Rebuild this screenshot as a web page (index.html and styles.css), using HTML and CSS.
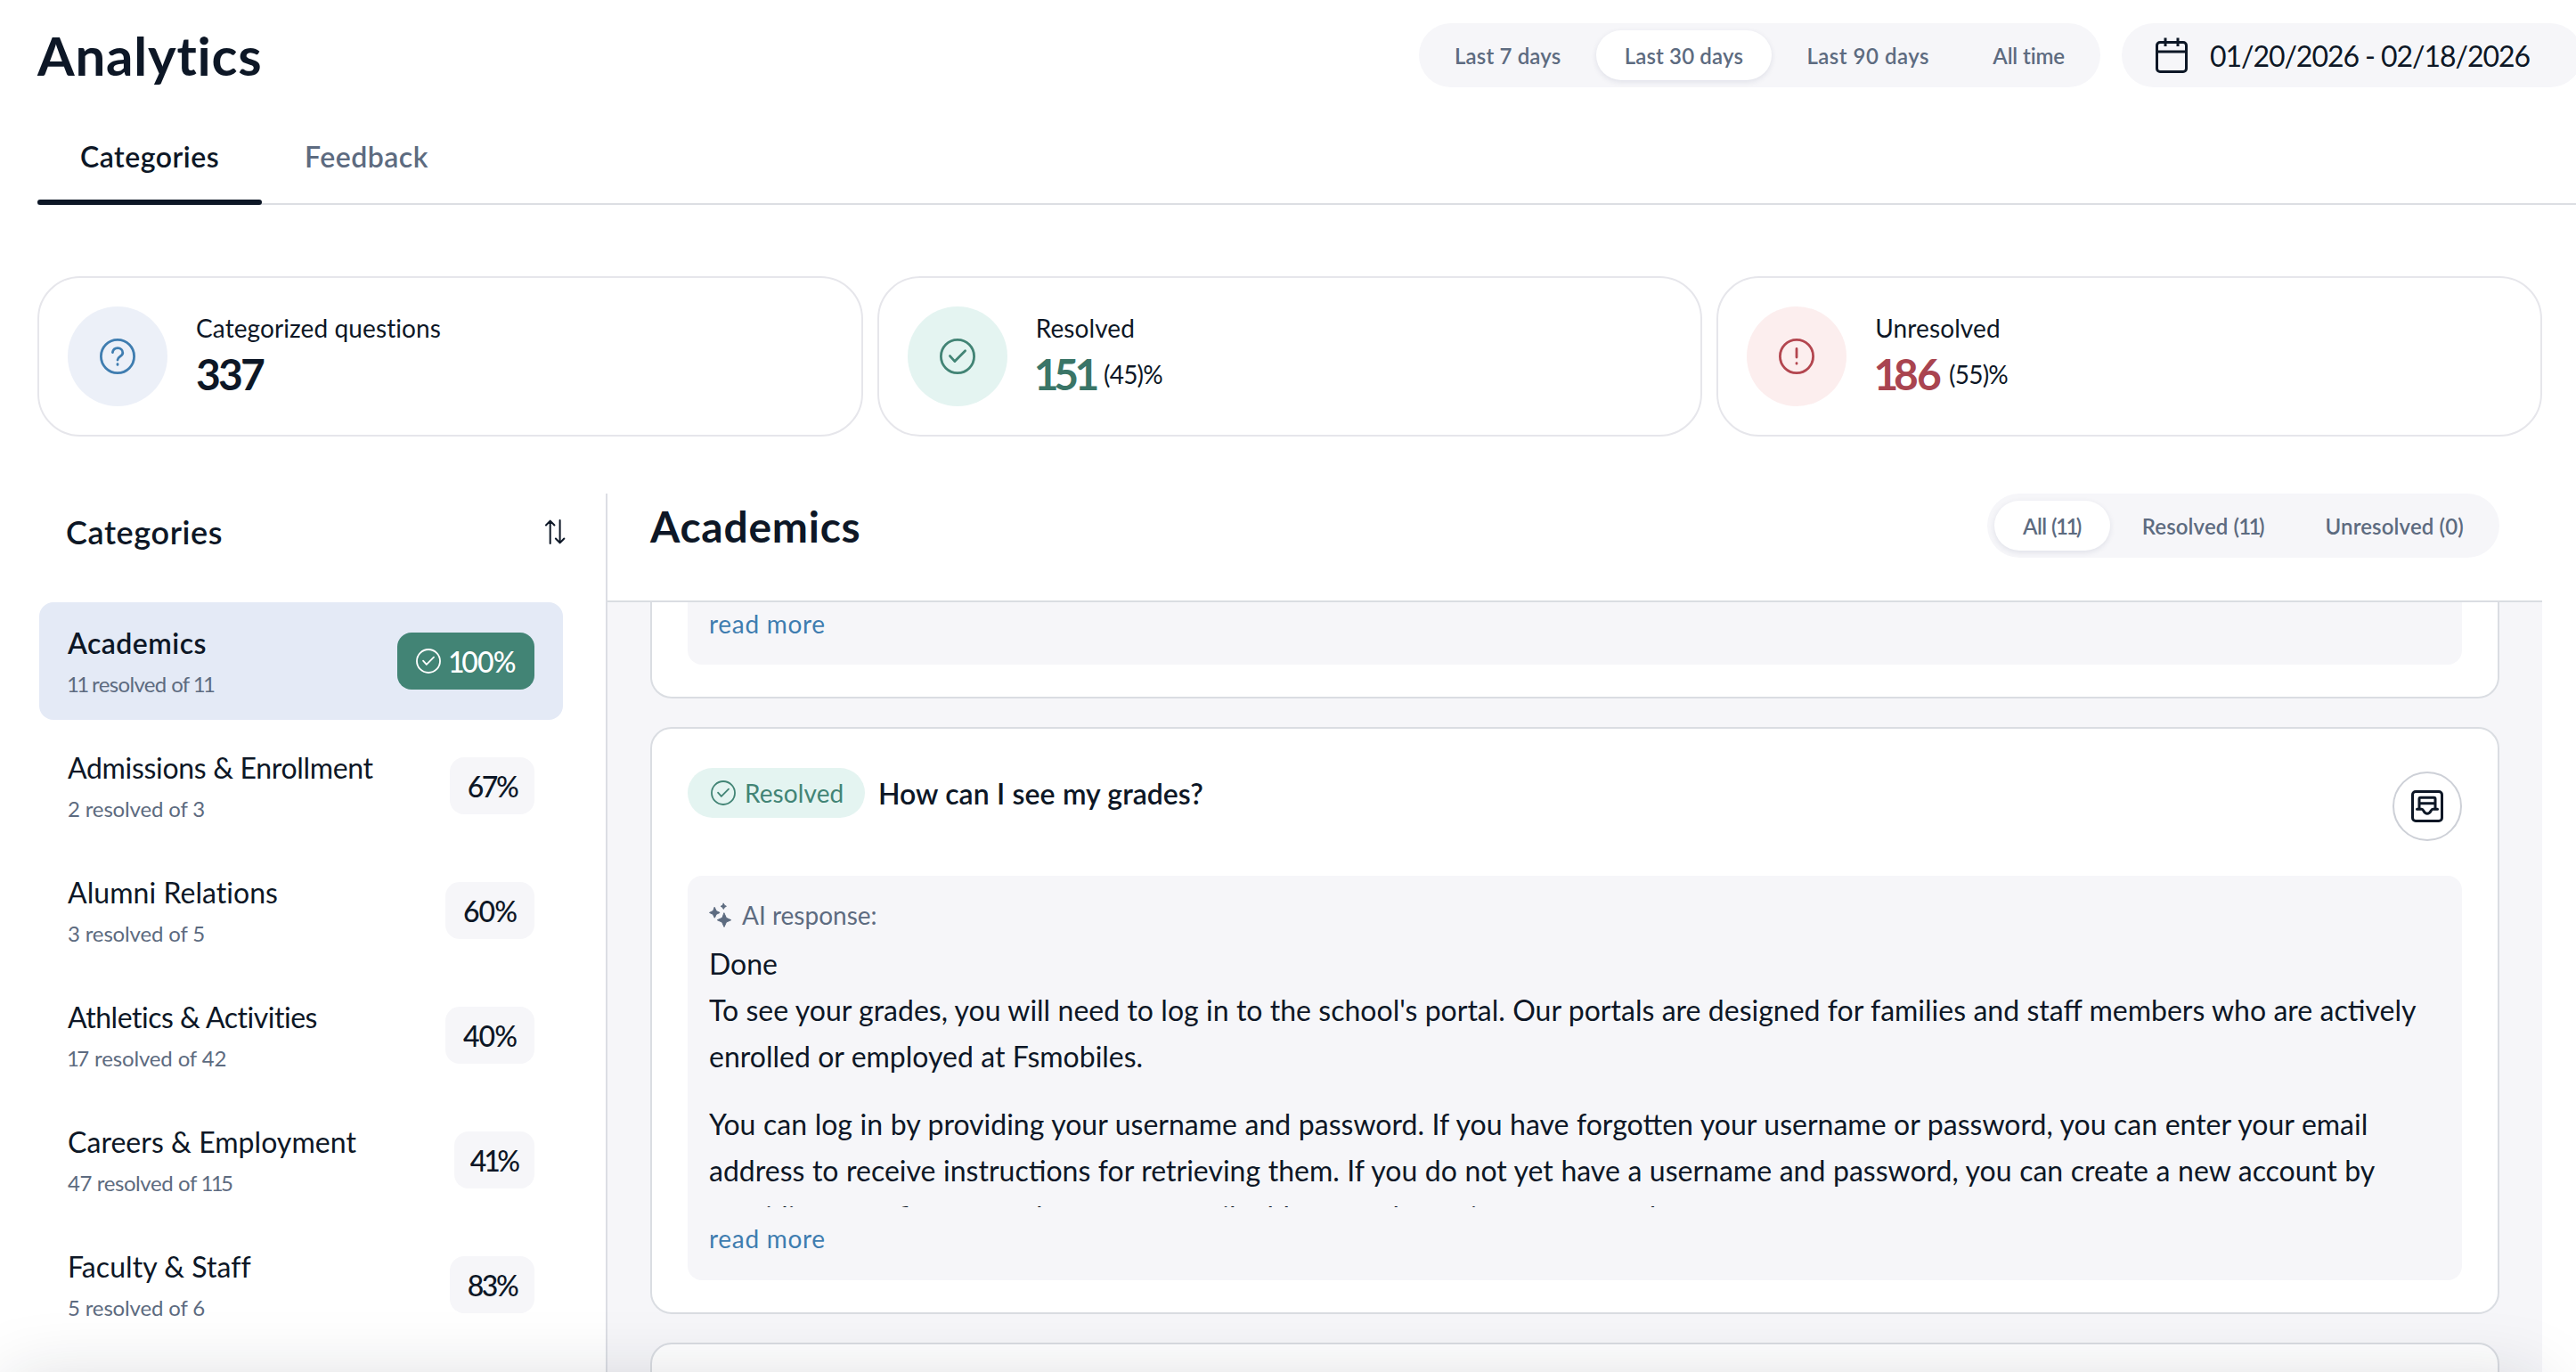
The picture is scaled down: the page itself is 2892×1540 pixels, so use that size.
FILE: index.html
```html
<!DOCTYPE html>
<html lang="en">
<head>
<meta charset="utf-8">
<title>Analytics</title>
<link rel="stylesheet" href="styles.css">
</head>
<body>
<svg class="defs" width="0" height="0" aria-hidden="true">
  <symbol id="check" viewBox="0 0 40 40">
    <circle cx="20" cy="20" r="18.6"/>
    <path d="M11.5 19.6l5.4 6L28.6 13.8"/>
  </symbol>
</svg>

<header class="topbar">
  <h1 class="title">Analytics</h1>
  <div class="segmented segmented--range">
    <button class="segment">Last 7 days</button>
    <button class="segment segment--active">Last 30 days</button>
    <button class="segment segment--loose">Last 90 days</button>
    <button class="segment segment--tight">All time</button>
  </div>
  <button class="daterange">
    <svg class="calendar" viewBox="0 0 36 40"><rect x="1.5" y="5.5" width="33" height="33" rx="3.5"/><path d="M1.5 16h33M11 .5v9.5M25 .5v9.5"/></svg>
    <span>01/20/2026 - 02/18/2026</span>
  </button>
</header>

<nav class="tabs">
  <a class="tab tab--active">Categories</a>
  <a class="tab">Feedback</a>
</nav>

<section class="stats">
  <article class="stat">
    <span class="stat-icon stat-icon--blue">
      <svg viewBox="0 0 40 40"><circle cx="20" cy="20" r="18.6"/><path d="M14.4 15.6c.5-3 2.700-4.900 5.700-4.900 3.300 0 5.700 2.200 5.700 5.200 0 4.300-5.800 4.100-5.800 8.100M20 28.600v.8"/></svg>
    </span>
    <div class="stat-text">
      <span class="stat-label">Categorized questions</span>
      <div class="stat-row"><strong class="stat-value">337</strong></div>
    </div>
  </article>
  <article class="stat">
    <span class="stat-icon stat-icon--green"><svg><use href="#check"/></svg></span>
    <div class="stat-text">
      <span class="stat-label">Resolved</span>
      <div class="stat-row"><strong class="stat-value stat-value--green"><span class="one">1</span>5<span class="one">1</span></strong><span class="stat-share">(45)%</span></div>
    </div>
  </article>
  <article class="stat">
    <span class="stat-icon stat-icon--red">
      <svg viewBox="0 0 40 40"><circle cx="20" cy="20" r="18.6"/><path d="M20 11.500v9.500M20 27.600v.6"/></svg>
    </span>
    <div class="stat-text">
      <span class="stat-label">Unresolved</span>
      <div class="stat-row"><strong class="stat-value stat-value--red"><span class="one">1</span>86</strong><span class="stat-share">(55)%</span></div>
    </div>
  </article>
</section>

<main class="panel">
  <aside class="sidebar">
    <div class="sidebar-head">
      <h2 class="sidebar-title">Categories</h2>
      <svg class="sort" viewBox="0 0 24 28"><path d="M5.700 27V2M1 6.500L5.700 1.600l4.700 4.900M16.600 1v25M11.900 21.500l4.700 4.900 4.700-4.900"/></svg>
    </div>
    <ul class="categories">
      <li class="category category--active">
        <div class="category-text"><span class="category-name">Academics</span><span class="category-sub category-sub--tight"><span class="one">11</span> resolved of <span class="one">11</span></span></div>
        <span class="badge badge--full"><svg><use href="#check"/></svg><span><span class="one">1</span>00%</span></span>
      </li>
      <li class="category">
        <div class="category-text"><span class="category-name">Admissions &amp; Enrollment</span><span class="category-sub">2 resolved of 3</span></div>
        <span class="badge">67%</span>
      </li>
      <li class="category">
        <div class="category-text"><span class="category-name category-name--loose">Alumni Relations</span><span class="category-sub">3 resolved of 5</span></div>
        <span class="badge badge--wide">60%</span>
      </li>
      <li class="category">
        <div class="category-text"><span class="category-name category-name--tight">Athletics &amp; Activities</span><span class="category-sub"><span class="one">1</span>7 resolved of 42</span></div>
        <span class="badge badge--wide">40%</span>
      </li>
      <li class="category">
        <div class="category-text"><span class="category-name category-name--loose">Careers &amp; Employment</span><span class="category-sub category-sub--snug">47 resolved of <span class="one">11</span>5</span></div>
        <span class="badge badge--narrow">4<span class="one">1</span>%</span>
      </li>
      <li class="category">
        <div class="category-text"><span class="category-name category-name--loose">Faculty &amp; Staff</span><span class="category-sub">5 resolved of 6</span></div>
        <span class="badge">83%</span>
      </li>
    </ul>
  </aside>

  <section class="detail">
    <div class="detail-head">
      <h2 class="detail-title">Academics</h2>
      <div class="segmented segmented--status">
        <button class="segment segment--active segment--all">All (<span class="one">11</span>)</button>
        <button class="segment">Resolved (<span class="one">11</span>)</button>
        <button class="segment">Unresolved (0)</button>
      </div>
    </div>
    <div class="feed">
      <article class="card card--first">
        <div class="answer answer--end"><a class="more">read more</a></div>
      </article>
      <article class="card">
        <div class="card-head">
          <span class="pill"><svg><use href="#check"/></svg>Resolved</span>
          <h3 class="question">How can I see my grades?</h3>
          <button class="round" aria-label="Open conversation">
            <svg viewBox="0 0 36 36"><rect x="1.500" y="1.500" width="33" height="33" rx="3.500"/><path d="M9 21V9.800c0-.9.600-1.500 1.500-1.500h15c.9 0 1.500.6 1.500 1.500V21M9 14.800h18M6.500 21.300h5.300c2.400 0 2 4.900 6.200 4.900s3.800-4.900 6.200-4.900h5.300"/></svg>
          </button>
        </div>
        <div class="answer">
          <div class="answer-label">
            <svg viewBox="0 0 26 28"><path d="M17 12l2.400 5.300 5.300 2.400-5.300 2.400L17 27.400l-2.400-5.300-5.300-2.400 5.300-2.400zM6.300 5.600l1.900 3.900 3.900 1.900-3.900 1.900-1.900 3.900-1.900-3.900L.5 11.400l3.900-1.900zM16.300 1.200l1.100 2 2 1.100-2 1.100-1.100 2-1.100-2-2-1.100 2-1.100z"/></svg>
            AI response:
          </div>
          <div class="answer-body">
            <p>Done</p>
            <p class="spaced">To see your grades, you will need to log in to the school's portal. Our portals are designed for families and staff members who are actively<br>enrolled or employed at Fsmobiles.</p>
            <p class="spaced-more">You can log in by providing your username and password. If you have forgotten your username or password, you can enter your email<br>address to receive instructions for retrieving them. If you do not yet have a username and password, you can create a new account by<br>providing your first name, last name, email address, and creating a password.</p>
          </div>
          <a class="more">read more</a>
        </div>
      </article>
      <article class="card card--next"></article>
    </div>
  </section>
</main>
<div class="dock-shadow"></div>
</body>
</html>
```
FILE: styles.css
```css
* { box-sizing: border-box; }

body {
  margin: 0;
  width: 2892px;
  height: 1540px;
  overflow: hidden;
  background: #fff;
  color: #0d1726;
  font-family: "Lato", "Liberation Sans", sans-serif;
  font-size: 32px;
  display: flex;
  flex-direction: column;
}

h1, h2, h3, p, ul { margin: 0; padding: 0; }
button { border: 0; font-family: inherit; color: inherit; padding: 0; }
svg { display: block; flex: none; fill: none; stroke: currentColor; stroke-width: 3; stroke-linecap: round; stroke-linejoin: round; }
.defs { position: absolute; }

/* narrows the tabular figure 1 */
.one { letter-spacing: -.11em; margin-left: -.04em; }

.topbar { flex: none; width: 2857px; height: 98px; margin-left: 42px; padding-top: 26px; display: flex; align-items: flex-start; }
.title { font-size: 60px; line-height: 72px; font-weight: 700; letter-spacing: .8px; margin-right: auto; }

.segmented { height: 72px; padding: 8px; border-radius: 36px; background: #f6f6f9; display: flex; justify-content: space-between; }
.segmented--range { width: 765px; margin-right: 24px; }
.segmented--status { width: 575px; }
.segment { height: 56px; padding: 0 32px; border-radius: 28px; background: transparent; color: #5d6b80; font-size: 24px; font-weight: 600; letter-spacing: .15px; white-space: nowrap; }
.segment--active { background: #fff; box-shadow: 0 2px 6px rgba(30, 40, 90, .1); }
.segment--loose { letter-spacing: .5px; }
.segment--tight { letter-spacing: -.1px; }
.segment--all { letter-spacing: -.5px; }

.daterange { width: 517px; height: 72px; border-radius: 36px; background: #f6f6f9; padding-left: 38px; display: flex; align-items: center; gap: 25px; font-size: 32px; letter-spacing: -1.05px; white-space: nowrap; }
.calendar { width: 36px; height: 40px; stroke-linecap: butt; }

.tabs { flex: none; margin: 28px 0 0 42px; height: 104px; border-bottom: 2px solid #dcdee3; display: flex; }
.tab { position: relative; padding: 0 48px; line-height: 100px; font-weight: 600; letter-spacing: .5px; color: #5d6b80; }
.tab--active { width: 252px; color: #0d1726; }
.tab--active::after { content: ""; position: absolute; left: 0; right: 0; bottom: -2px; height: 6px; border-radius: 3px; background: #0d1726; }

.stats { flex: none; margin: 80px 38px 0 42px; display: grid; grid-template-columns: repeat(3, 1fr); gap: 16px; }
.stat { height: 180px; border: 2px solid #e6e6eb; border-radius: 48px; padding-left: 32px; display: flex; align-items: center; gap: 32px; }
.stat-icon { width: 112px; height: 112px; border-radius: 50%; display: flex; align-items: center; justify-content: center; }
.stat-icon svg { width: 40px; height: 40px; stroke-width: 2.8; }
.stat-icon--blue { background: #ecf0f8; color: #3f7db0; }
.stat-icon--green { background: #e4f4f1; color: #428475; }
.stat-icon--red { background: #fceeee; color: #b3464f; }
.stat-text { display: flex; flex-direction: column; gap: 4px; }
.stat-label { font-size: 28px; line-height: 36px; letter-spacing: .1px; }
.stat-row { display: flex; align-items: center; gap: 10px; line-height: 60px; }
.stat-value { font-size: 48px; letter-spacing: -2.8px; }
.stat-value--green { color: #3a7567; }
.stat-value--red { color: #a94450; letter-spacing: -1.8px; }
.stat-share { font-size: 28px; letter-spacing: -.8px; }

.panel { flex: 1; min-height: 0; margin: 64px 38px 0 42px; display: flex; }
.sidebar { width: 640px; flex: none; border-right: 2px solid #dcdee4; overflow: hidden; }
.sidebar-head { height: 122px; padding: 0 44px 36px 32px; display: flex; align-items: center; justify-content: space-between; }
.sidebar-title { font-size: 36px; font-weight: 600; letter-spacing: .6px; }
.sort { width: 24px; height: 28px; stroke-width: 2; }
.categories { list-style: none; display: flex; flex-direction: column; gap: 8px; margin-left: 2px; width: 588px; }
.category { height: 132px; border-radius: 16px; padding: 0 32px; display: flex; align-items: center; justify-content: space-between; }
.category--active { background: #e4eaf6; }
.category-text { display: flex; flex-direction: column; gap: 3px; padding-top: 3px; }
.category-name { line-height: 46px; letter-spacing: -.32px; }
.category--active .category-name { font-weight: 600; letter-spacing: .45px; }
.category-name--tight { letter-spacing: -.48px; }
.category-name--loose { letter-spacing: .05px; }
.category-sub { font-size: 24px; line-height: 40px; letter-spacing: -.15px; color: #5d6b80; }
.category-sub--snug { letter-spacing: -.4px; }
.category-sub--tight { letter-spacing: -.65px; }
.badge { width: 95px; height: 64px; border-radius: 16px; background: #f6f6f9; font-weight: 500; letter-spacing: -2.4px; display: flex; align-items: center; justify-content: center; }
.badge--narrow { width: 90px; letter-spacing: -1.8px; }
.badge--wide { width: 100px; letter-spacing: -1px; }
.badge--full { width: 154px; background: #428475; color: #fff; gap: 9px; letter-spacing: -.8px; }
.badge svg, .pill svg { width: 28px; height: 28px; stroke-width: 2.6; }

.detail { flex: 1; min-width: 0; display: flex; flex-direction: column; }
.detail-head { flex: none; height: 122px; border-bottom: 2px solid #dadde2; padding: 0 48px; display: flex; align-items: flex-start; justify-content: space-between; }
.detail-title { font-size: 48px; line-height: 73px; font-weight: 700; letter-spacing: .75px; }
.feed { flex: 1; min-height: 0; overflow: hidden; background: #f6f6f9; padding: 0 48px; display: flex; flex-direction: column; gap: 32px; }
.card { flex: none; background: #fff; border: 2px solid #dadde2; border-radius: 24px; padding: 44px 40px 36px; }
.card--first { border-top: 0; border-radius: 0 0 24px 24px; padding-top: 0; }
.card--next { height: 200px; }
.card-head { height: 121px; display: flex; align-items: flex-start; }
.pill { width: 199px; height: 56px; border-radius: 28px; background: #e4f4f1; color: #428475; font-size: 28px; letter-spacing: .1px; padding-left: 26px; display: flex; align-items: center; gap: 10px; }
.question { font-size: 32px; line-height: 57px; font-weight: 600; margin: 0 auto 0 15px; word-spacing: .4px; }
.round { width: 78px; height: 78px; margin-top: 4px; border: 2px solid #cdd0d7; border-radius: 50%; background: #fff; display: flex; align-items: center; justify-content: center; }
.round svg { width: 36px; height: 36px; }

.answer { background: #f6f6f9; border-radius: 16px; padding: 24px 24px 27px; }
.answer--end { height: 70px; padding: 4px 24px 0; border-radius: 0 0 16px 16px; }
.answer-label { display: flex; align-items: center; gap: 11px; font-size: 28px; line-height: 40px; color: #5d6b80; }
.answer-label svg { width: 26px; height: 28px; fill: currentColor; stroke-width: 1; }
.answer-body { height: 299px; margin-top: 9px; overflow: hidden; line-height: 52px; white-space: nowrap; }
.spaced { word-spacing: .17px; }
.spaced-more { margin-top: 24px; word-spacing: .4px; }
.more { display: block; font-size: 28px; line-height: 40px; letter-spacing: .7px; color: #3f7db0; }
.answer-body + .more { margin-top: 15px; }

/* shadow cast upward by the dock below the fold */
.dock-shadow { position: fixed; left: 10px; top: 1550px; width: 2840px; height: 100px; box-shadow: 0 0 80px rgba(24, 28, 44, .17); pointer-events: none; }
```
